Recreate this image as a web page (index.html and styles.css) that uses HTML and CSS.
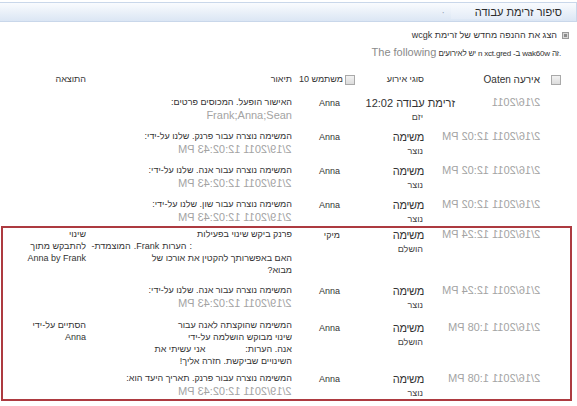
FILE: index.html
```html
<!DOCTYPE html>
<html lang="he" dir="rtl">
<head>
<meta charset="utf-8">
<title>סיפור זרימת עבודה</title>
<link rel="stylesheet" href="styles.css">
</head>
<body>
<div class="page">
  <div class="titlebar">
    <span class="title">סיפור זרימת עבודה</span>
    <span class="tab-dot">·</span>
  </div>

  <div class="notes">
    <p class="note1">
      <svg class="note-icon" width="7" height="7" viewBox="0 0 7 7"><rect x="0.5" y="0.5" width="6" height="6" fill="#d8d8d8" stroke="#9a9a9a"/><rect x="2" y="2" width="3" height="3" fill="#8d8d8d"/></svg>
      <span>הצג את ההנפה מחדש של זרימת wcgk</span>
    </p>
    <p class="note2">
      <span class="w">.זה</span>
      <span class="w">wak60w</span>
      <span class="w">ב-</span>
      <span class="w">xct.gred</span>
      <span class="w">n</span>
      <span class="w">יש</span>
      <span class="w">לאירועים</span>
      <span class="w en">The following</span>
    </p>
  </div>

  <div class="table">
    <div class="row head">
      <div class="cell c-chk"><span class="chk"></span></div>
      <div class="cell c-date">אירעה Oaten</div>
      <div class="cell c-type">סוגי אירוע</div>
      <div class="cell c-user"><span class="chk"></span><span>משתמש 10</span></div>
      <div class="cell c-desc">תיאור</div>
      <div class="cell c-out">התוצאה</div>
    </div>

    <div class="row">
      <div class="cell c-chk"></div>
      <div class="cell c-date"><span class="mirror">2/16/2011</span></div>
      <div class="cell c-type"><span class="ev ev-wide">זרימת עבודה 12:02</span><span class="ev-sub">יזם</span></div>
      <div class="cell c-user">Anna</div>
      <div class="cell c-desc"><span class="d">האישור הופעל. המכוסים פרטים:</span><span class="g ltr">Frank;Anna;Sean</span></div>
      <div class="cell c-out"></div>
    </div>

    <div class="row">
      <div class="cell c-chk"></div>
      <div class="cell c-date"><span class="mirror">2/16/2011 12:02 PM</span></div>
      <div class="cell c-type"><span class="ev">משימה</span><span class="ev-sub">נוצר</span></div>
      <div class="cell c-user">Anna</div>
      <div class="cell c-desc"><span class="d">המשימה נוצרה עבור פרנק. שלנו על-ידי:</span><span class="g"><span class="mirror">2/19/2011 12:02:43 PM</span></span></div>
      <div class="cell c-out"></div>
    </div>

    <div class="row">
      <div class="cell c-chk"></div>
      <div class="cell c-date"><span class="mirror">2/16/2011 12:02 PM</span></div>
      <div class="cell c-type"><span class="ev">משימה</span><span class="ev-sub">נוצר</span></div>
      <div class="cell c-user">Anna</div>
      <div class="cell c-desc"><span class="d">המשימה נוצרה עבור אנה. שלנו על-ידי:</span><span class="g"><span class="mirror">2/19/2011 12:02:43 PM</span></span></div>
      <div class="cell c-out"></div>
    </div>

    <div class="row">
      <div class="cell c-chk"></div>
      <div class="cell c-date"><span class="mirror">2/16/2011 12:02 PM</span></div>
      <div class="cell c-type"><span class="ev">משימה</span><span class="ev-sub">נוצר</span></div>
      <div class="cell c-user">Anna</div>
      <div class="cell c-desc"><span class="d">המשימה נוצרה עבור שון. שלנו על-ידי:</span><span class="g"><span class="mirror">2/19/2011 12:02:43 PM</span></span></div>
      <div class="cell c-out"></div>
    </div>

    <div class="box">
      <div class="row r5">
        <div class="cell c-chk"></div>
        <div class="cell c-date"><span class="mirror">2/16/2011 12:24 PM</span></div>
        <div class="cell c-type"><span class="ev">משימה</span><span class="ev-sub">הושלם</span></div>
        <div class="cell c-user">מיקי</div>
        <div class="cell c-desc">
          <span class="d">פרנק ביקש שינוי בפעילות</span>
          <span class="d comment"><span class="w">:</span><span class="w">הערות</span><span class="w">Frank.</span><span class="w">המוצמדת-</span></span>
          <span class="d">האם באפשרותך להקטין את אורכו של</span>
          <span class="d">מבוא?</span>
        </div>
        <div class="cell c-out"><span class="d">שינוי</span><span class="d">להתבקש מתוך</span><span class="d">Anna by Frank</span></div>
      </div>

      <div class="row r6">
        <div class="cell c-chk"></div>
        <div class="cell c-date"><span class="mirror">2/16/2011 12:24 PM</span></div>
        <div class="cell c-type"><span class="ev">משימה</span><span class="ev-sub">נוצר</span></div>
        <div class="cell c-user">Anna</div>
        <div class="cell c-desc"><span class="d">המשימה נוצרה עבור אנה. שלנו על-ידי:</span><span class="g"><span class="mirror">2/19/2011 12:02:43 PM</span></span></div>
        <div class="cell c-out"></div>
      </div>

      <div class="row r7">
        <div class="cell c-chk"></div>
        <div class="cell c-date"><span class="mirror">2/16/2011 1:08 PM</span></div>
        <div class="cell c-type"><span class="ev">משימה</span><span class="ev-sub">הושלם</span></div>
        <div class="cell c-user">Anna</div>
        <div class="cell c-desc desc-up">
          <span class="d">המשימה שהוקצתה לאנה עבור</span>
          <span class="d">שינוי מבוקש הושלמה על-ידי</span>
          <span class="d">אנה. הערות:<span class="gap"></span>אני עשיתי את</span>
          <span class="d">השינויים שביקשת. חזרה אליך!</span>
        </div>
        <div class="cell c-out desc-up"><span class="d">הסתיים על-ידי</span><span class="d">Anna</span></div>
      </div>

      <div class="row r8">
        <div class="cell c-chk"></div>
        <div class="cell c-date"><span class="mirror">2/16/2011 1:08 PM</span></div>
        <div class="cell c-type"><span class="ev">משימה</span><span class="ev-sub">נוצר</span></div>
        <div class="cell c-user">Anna</div>
        <div class="cell c-desc"><span class="d">המשימה נוצרה עבור פרנק. תאריך היעד הוא:</span><span class="g"><span class="mirror">2/19/2011 12:02:43 PM</span></span></div>
        <div class="cell c-out"></div>
      </div>
    </div>
  </div>
</div>
</body>
</html>
```

FILE: styles.css
```css
html, body {
  margin: 0;
  padding: 0;
  background: #ffffff;
}

body {
  font-family: "Liberation Sans", "DejaVu Sans", sans-serif;
  font-size: 10px;
  color: #333333;
  width: 577px;
  height: 406px;
  overflow: hidden;
}

.page {
  display: flex;
  flex-direction: column;
}

/* title bar */
.titlebar {
  margin-top: 2px;
  height: 20px;
  box-sizing: border-box;
  border: 1px solid #c9d7ea;
  border-left: none;
  background: linear-gradient(#f9fbfe, #dbe6f4);
  display: flex;
  align-items: center;
  padding-right: 14px;
}

.title {
  font-size: 11px;
  color: #2b2b2b;
  background: linear-gradient(#f6f9fd, #e4ecf7);
  padding: 1px 0 1px 24px;
}

.tab-dot {
  color: #9aa8bb;
  font-size: 10px;
  margin-right: 6px;
}

/* notes */
.notes {
  padding: 6px 12px 0 0;
  display: flex;
  flex-direction: column;
}

.note1 {
  margin: 0 -4px 0 0;
  display: flex;
  align-items: center;
  gap: 5px;
  font-size: 9px;
  line-height: 14px;
  color: #333;
}

.note-icon {
  display: block;
}

.note2 {
  margin: 2px 0 0 0;
  display: flex;
  align-items: baseline;
  gap: 2px;
  padding-right: 4px;
  font-size: 8px;
  letter-spacing: -0.2px;
  line-height: 16px;
  color: #333;
}

.w {
  display: inline-block;
}

.ltr {
  direction: ltr;
}

.note2 .en {
  font-size: 11px;
  letter-spacing: 0;
  color: #8a8a8a;
  margin-left: 0;
}

/* table */
.table {
  margin-top: 9px;
  display: flex;
  flex-direction: column;
}

.row {
  display: grid;
  grid-template-columns: 37px 116px 68px 64px 206px 86px;
  padding: 4px 0 3px;
  line-height: 13px;
}

.cell {
  min-width: 0;
  display: flex;
  flex-direction: column;
  align-items: flex-start;
}

.head {
  padding: 0;
  height: 17px;
  margin-bottom: 4px;
  align-items: center;
}

.head .cell {
  flex-direction: row;
  align-items: center;
  font-size: 9px;
  color: #333;
  white-space: nowrap;
}

.head .c-date {
  font-size: 10px;
  color: #333;
}

.head .c-user {
  gap: 2px;
  padding-right: 1px;
}

.chk {
  display: inline-block;
  width: 10px;
  height: 10px;
  box-sizing: border-box;
  border: 1px solid #a9a9a9;
  background: linear-gradient(#f2f2f2, #dcdcdc);
}

.head .c-chk {
  padding-right: 16px;
}

.c-date {
  font-size: 11px;
  color: #a3a3a3;
}

.mirror {
  display: inline-block;
  transform: scaleX(-1);
  direction: ltr;
  white-space: nowrap;
}

.ev {
  font-size: 11px;
  letter-spacing: -0.3px;
  color: #333;
  line-height: 15px;
}

.ev-wide {
  margin-right: -31px;
  letter-spacing: 0;
  white-space: nowrap;
}

.ev-sub {
  font-size: 9px;
  color: #444;
  line-height: 12px;
  padding-right: 1px;
}

.c-user {
  padding-right: 16px;
  font-size: 9px;
  line-height: 15px;
}

.c-desc {
  font-size: 9px;
}

.d {
  display: block;
  white-space: nowrap;
  line-height: 12px;
}

.g {
  display: block;
  font-size: 11px;
  color: #a3a3a3;
  line-height: 15px;
}

.c-out {
  font-size: 9px;
}

/* highlighted box */
.box {
  margin: -2px 5px 0 1px;
  border: 2px solid #ad3a40;
  display: flex;
  flex-direction: column;
}

.box .row {
  grid-template-columns: 30px 116px 68px 64px 206px 81px;
}

.box .r5 {
  padding: 0 0 4px;
}

.box .r6 {
  padding: 4px 0 6px;
}

.box .r7 {
  padding: 4px 0 1px;
}

.box .r8 {
  padding: 4px 0 0;
}

.desc-up {
  margin-top: -2px;
}

.comment {
  display: flex;
  gap: 3px;
  padding-right: 100px;
}

.gap {
  display: inline-block;
  width: 40px;
}
```
